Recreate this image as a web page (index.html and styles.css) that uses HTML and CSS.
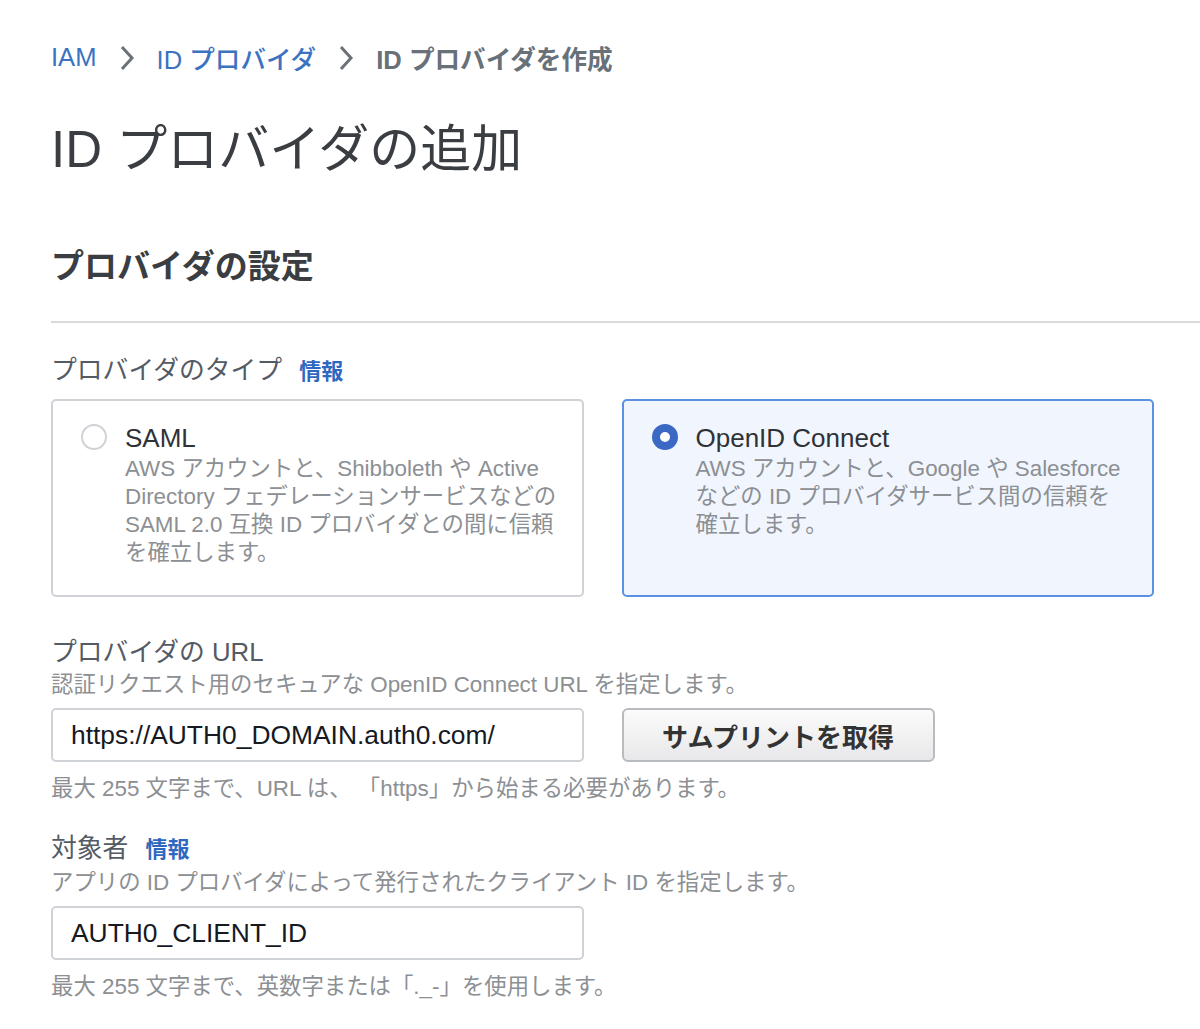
FILE: index.html
```html
<!doctype html>
<html lang="ja">
  <head>
    <meta charset="utf-8" />
    <link rel="stylesheet" href="styles.css">
  </head>
  <body>
    <div class="page">
      <nav class="breadcrumb">
        <a class="crumb-link">IAM</a>
        <svg class="crumb-sep" viewBox="0 0 16 26" width="16" height="26">
          <path d="M3 2 L13 13 L3 24" fill="none" stroke="#6b7178" stroke-width="3" />
        </svg>
        <a class="crumb-link">ID プロバイダ</a>
        <svg class="crumb-sep" viewBox="0 0 16 26" width="16" height="26">
          <path d="M3 2 L13 13 L3 24" fill="none" stroke="#6b7178" stroke-width="3" />
        </svg>
        <span class="crumb-current">ID プロバイダを作成</span>
      </nav>

      <h1 class="page-title">ID プロバイダの追加</h1>

      <div class="section-header">
        <h2 class="section-title">プロバイダの設定</h2>
      </div>

      <div class="field field-type">
        <div class="field-label">プロバイダのタイプ <a class="info-link">情報</a></div>
        <div class="tiles">
          <div class="tile">
            <span class="radio"></span>
            <div class="tile-body">
              <div class="tile-title">SAML</div>
              <div class="tile-desc">AWS アカウントと、Shibboleth や Active Directory フェデレーションサービスなどの SAML 2.0 互換 ID プロバイダとの間に信頼を確立します。</div>
            </div>
          </div>
          <div class="tile selected">
            <span class="radio checked"></span>
            <div class="tile-body">
              <div class="tile-title">OpenID Connect</div>
              <div class="tile-desc">AWS アカウントと、Google や Salesforce などの ID プロバイダサービス間の信頼を確立します。</div>
            </div>
          </div>
        </div>
      </div>

      <div class="field field-url">
        <div class="field-label">プロバイダの URL</div>
        <div class="field-desc">認証リクエスト用のセキュアな OpenID Connect URL を指定します。</div>
        <div class="input-row">
          <div class="text-input">https://AUTH0_DOMAIN.auth0.com/</div>
          <button class="btn">サムプリントを取得</button>
        </div>
        <div class="field-hint">最大 255 文字まで、URL は、 「https」から始まる必要があります。</div>
      </div>

      <div class="field field-audience">
        <div class="field-label">対象者 <a class="info-link">情報</a></div>
        <div class="field-desc">アプリの ID プロバイダによって発行されたクライアント ID を指定します。</div>
        <div class="input-row">
          <div class="text-input">AUTH0_CLIENT_ID</div>
        </div>
        <div class="field-hint">最大 255 文字まで、英数字または「._-」を使用します。</div>
      </div>
    </div>
  </body>
</html>
```

FILE: styles.css
```css
* {
  margin: 0;
  padding: 0;
  box-sizing: border-box;
}

body {
  width: 1200px;
  height: 1029px;
  font-family: 'Liberation Sans', 'Noto Sans CJK JP', sans-serif;
  background: #fff;
  color: #545b64;
  overflow: hidden;
}

.page {
  padding: 40px 0 0 51px;
}

.breadcrumb {
  display: flex;
  align-items: center;
  height: 34px;
  font-size: 25.6px;
  font-weight: 500;
}

.crumb-link {
  color: #3b73c2;
}

.crumb-sep {
  margin: 2px 22px 0 22px;
}

.crumb-current {
  color: #687078;
  font-weight: 700;
}

.page-title {
  margin-top: 45px;
  font-size: 51px;
  font-weight: 400;
  line-height: 62px;
  color: #3a3d41;
}

.section-header {
  margin-top: 66px;
  padding-bottom: 34px;
  border-bottom: 2px solid #d8dbdd;
}

.section-title {
  font-size: 33px;
  font-weight: 700;
  line-height: 40px;
  color: #3a3d41;
}

.field {
  margin-right: 46px;
}

.field-type {
  margin-top: 30px;
}

.field-url {
  margin-top: 38px;
}

.field-audience {
  margin-top: 26px;
}

.field-label {
  font-size: 25.8px;
  line-height: 34px;
  color: #545b64;
}

.info-link {
  margin-left: 10px;
  font-size: 22px;
  font-weight: 700;
  color: #2f68c0;
}

.tiles {
  display: grid;
  grid-template-columns: 1fr 1fr;
  gap: 38px;
  margin-top: 10px;
}

.tile {
  display: flex;
  height: 198px;
  padding: 22px 23px 22px 28px;
  border: 2px solid #cfd2d6;
  border-radius: 5px;
  gap: 18px;
}

.tile.selected {
  border-color: #5b91e0;
  background: #f1f6fe;
}

.radio {
  flex: none;
  width: 26px;
  height: 26px;
  margin-top: 1px;
  border: 2px solid #cfd2d6;
  border-radius: 50%;
  background: #fff;
}

.radio.checked {
  border: 8px solid #3a68c4;
}

.tile-title {
  font-size: 26px;
  line-height: 30px;
  color: #2f3236;
}

.tile-desc {
  margin-top: 2px;
  font-size: 22.4px;
  line-height: 28px;
  color: #8c8f93;
}

.field-desc {
  font-size: 22.4px;
  line-height: 32px;
  color: #8c8f93;
}

.input-row {
  display: grid;
  grid-template-columns: 1fr 1fr;
  gap: 38px;
  margin-top: 7px;
}

.text-input {
  height: 54px;
  padding: 0 18px;
  border: 2px solid #cfd2d6;
  border-radius: 5px;
  font-size: 26.4px;
  line-height: 50px;
  color: #16191f;
}

.btn {
  width: 313px;
  height: 54px;
  border: 2px solid #b8bbbf;
  border-radius: 6px;
  background: linear-gradient(#fbfbfb, #e8e8ea);
  font-family: 'Noto Sans CJK JP', sans-serif;
  font-size: 26px;
  font-weight: 700;
  color: #333;
}

.field-hint {
  margin-top: 11px;
  font-size: 22.4px;
  line-height: 32px;
  color: #8c8f93;
}
```
